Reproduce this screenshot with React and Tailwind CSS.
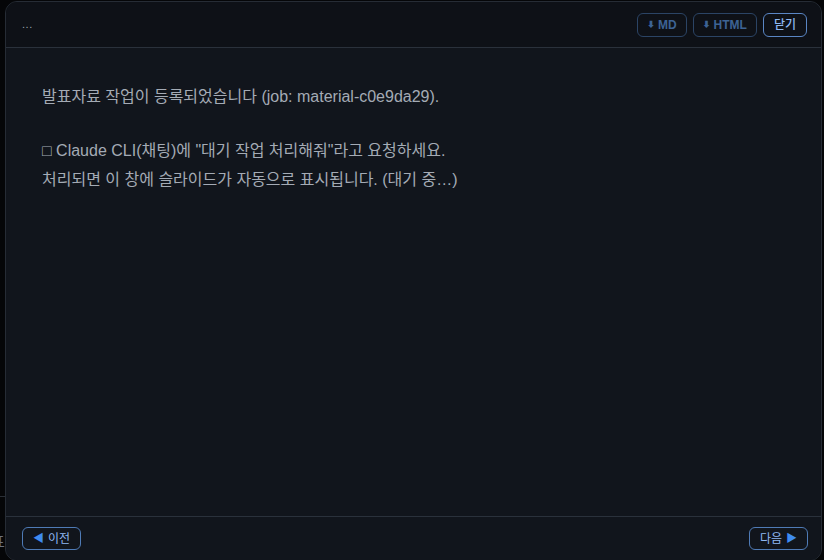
export default function App() {
  const font = { fontFamily: '"Liberation Sans", "Noto Sans CJK KR", sans-serif' };
  return (
    <div className="relative w-[824px] h-[560px] overflow-hidden bg-[#050608]" style={font}>
      <div className="absolute left-0 top-[496px] w-[6px] h-px bg-[#2a2f36]" />
      <div className="absolute left-[-9px] top-[531px] text-[15px] text-[#6b7280]">표</div>
      <div className="relative ml-[5px] mr-[2px] mt-[1px] h-[560px] flex flex-col rounded-xl border border-[#262c35] bg-[#11151c] overflow-hidden">
        <div className="h-[46px] flex items-center justify-between pl-[16px] pr-[14px] bg-[#0e1117] border-b border-[#2a313b]">
          <span className="text-[11px] text-[#9aa3ad] tracking-wider">...</span>
          <div className="flex items-center gap-[6px]">
            <button className="h-[24px] px-[9px] rounded-md border border-[#2b4465] text-[#3d6394] text-[12px] font-bold flex items-center gap-[3px]">
              <span className="text-[8px]">⬇</span>MD
            </button>
            <button className="h-[24px] px-[9px] rounded-md border border-[#2b4465] text-[#3d6394] text-[12px] font-bold flex items-center gap-[3px]">
              <span className="text-[8px]">⬇</span>HTML
            </button>
            <button className="h-[24px] px-[10px] rounded-md border border-[#5a86c4] text-[#8fb8f2] text-[12px] font-medium">
              닫기
            </button>
          </div>
        </div>
        <div className="h-[468px] px-[36px] pt-[34px] text-[16px] leading-[29px] text-[#a4abb5]">
          <p>발표자료 작업이 등록되었습니다 (job: material-c0e9da29).</p>
          <p className="mt-[25px]">□ Claude CLI(채팅)에 "대기 작업 처리해줘"라고 요청하세요.</p>
          <p>처리되면 이 창에 슬라이드가 자동으로 표시됩니다. (대기 중…)</p>
        </div>
        <div className="h-[44px] flex items-center justify-between pl-[16px] pr-[13px] border-t border-[#2a313b] bg-[#11151c]">
          <button className="h-[23px] px-[10px] rounded-md border border-[#4f7bb6] text-[#8fb8f2] text-[12px] flex items-center gap-[4px]">
            <span className="text-[#3f8cf0] text-[11px]">◀</span>이전
          </button>
          <button className="h-[23px] px-[10px] rounded-md border border-[#4f7bb6] text-[#8fb8f2] text-[12px] flex items-center gap-[4px]">
            다음<span className="text-[#3f8cf0] text-[11px]">▶</span>
          </button>
        </div>
      </div>
    </div>
  );
}
